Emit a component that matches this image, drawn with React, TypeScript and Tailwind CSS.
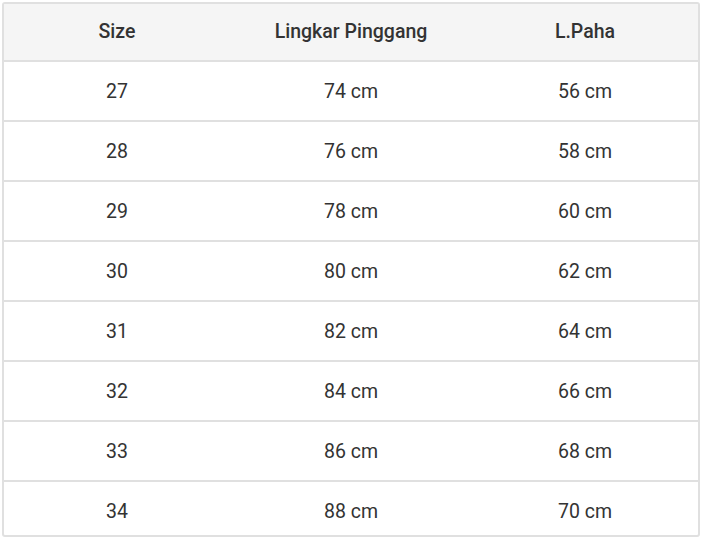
import React from "react";

const rows = [
  { size: "27", waist: "74 cm", thigh: "56 cm" },
  { size: "28", waist: "76 cm", thigh: "58 cm" },
  { size: "29", waist: "78 cm", thigh: "60 cm" },
  { size: "30", waist: "80 cm", thigh: "62 cm" },
  { size: "31", waist: "82 cm", thigh: "64 cm" },
  { size: "32", waist: "84 cm", thigh: "66 cm" },
  { size: "33", waist: "86 cm", thigh: "68 cm" },
  { size: "34", waist: "88 cm", thigh: "70 cm" },
];

const App: React.FC = () => {
  return (
    <div className="w-[702px] h-[540px] bg-white p-[2px] font-['Roboto',sans-serif] text-[19.5px] text-[#333]">
      <div className="border-2 border-[#e0e0e0] rounded-[3px] overflow-hidden h-[535px]">
        {/* header */}
        <div className="grid grid-cols-[226px_242px_226px] h-[56px] bg-[#f5f5f5] font-medium">
          <div className="flex items-center justify-center">Size</div>
          <div className="flex items-center justify-center">Lingkar Pinggang</div>
          <div className="flex items-center justify-center">L.Paha</div>
        </div>
        {rows.map((row) => (
          <div
            key={row.size}
            className="grid grid-cols-[226px_242px_226px] h-[60px] pt-[2px] border-t-2 border-[#e0e0e0]"
          >
            <div className="flex items-center justify-center">{row.size}</div>
            <div className="flex items-center justify-center">{row.waist}</div>
            <div className="flex items-center justify-center">{row.thigh}</div>
          </div>
        ))}
      </div>
    </div>
  );
};

export default App;
